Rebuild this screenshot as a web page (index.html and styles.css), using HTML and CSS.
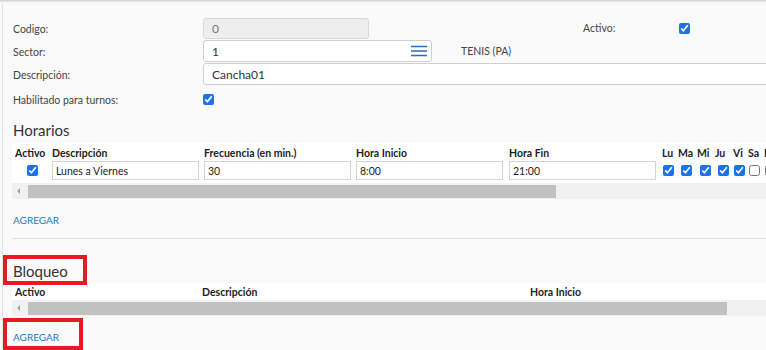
FILE: index.html
```html
<!DOCTYPE html>
<html lang="es">
<head>
  <meta charset="UTF-8" />
  <meta name="viewport" content="width=device-width, initial-scale=1.0"/>
  <title>Cancha</title>
  <link rel="stylesheet" href="styles.css">
</head>
<body>
  <!-- Shadow of the toolbar above -->
  <div class="edge"></div>

  <div class="panel">
    <!-- Main data -->
    <div class="row">
      <label class="label">Codigo:</label>
      <input class="field field-code" type="text" value="0" readonly />
      <label class="label-side">Activo:</label>
      <input class="check" type="checkbox" checked />
    </div>

    <div class="row">
      <label class="label">Sector:</label>
      <div class="field field-sector">
        <input class="field-inner" type="text" value="1" />
        <svg class="menu-icon" width="16" height="12" viewBox="0 0 16 12">
          <path d="M0 1.5h16M0 6h16M0 10.5h16" stroke="#2b6cb3" stroke-width="1.4" fill="none"/>
        </svg>
      </div>
      <span class="sector-name">TENIS (PA)</span>
    </div>

    <div class="row">
      <label class="label">Descripción:</label>
      <input class="field field-wide" type="text" value="Cancha01" />
    </div>

    <div class="row row-check">
      <label class="label">Habilitado para turnos:</label>
      <input class="check" type="checkbox" checked />
    </div>

    <!-- Horarios -->
    <h2 class="section-title">Horarios</h2>
    <div class="grid grid-horarios">
      <div class="th th-first">Activo</div>
      <div class="th">Descripción</div>
      <div class="th">Frecuencia (en min.)</div>
      <div class="th">Hora Inicio</div>
      <div class="th">Hora Fin</div>
      <div class="th">Lu</div>
      <div class="th">Ma</div>
      <div class="th">Mi</div>
      <div class="th">Ju</div>
      <div class="th">Vi</div>
      <div class="th">Sa</div>
      <div class="th">D</div>

      <div class="td td-center"><input class="check" type="checkbox" checked /></div>
      <div class="td"><input class="cell-input" type="text" value="Lunes a Viernes" /></div>
      <div class="td"><input class="cell-input" type="text" value="30" /></div>
      <div class="td"><input class="cell-input" type="text" value="8:00" /></div>
      <div class="td"><input class="cell-input" type="text" value="21:00" /></div>
      <div class="td td-day"><input class="check" type="checkbox" checked /></div>
      <div class="td td-day day-in"><input class="check" type="checkbox" checked /></div>
      <div class="td td-day day-in"><input class="check" type="checkbox" checked /></div>
      <div class="td td-day day-in"><input class="check" type="checkbox" checked /></div>
      <div class="td td-day"><input class="check" type="checkbox" checked /></div>
      <div class="td td-day"><input class="check" type="checkbox" /></div>
      <div class="td td-day"><input class="check" type="checkbox" /></div>
    </div>
    <div class="scrollbar">
      <span class="scroll-arrow"></span>
      <span class="scroll-thumb thumb-horarios"></span>
    </div>
    <a class="add-link" href="#">AGREGAR</a>

    <hr class="divider" />

    <!-- Bloqueo -->
    <h2 class="section-title title-bloqueo">Bloqueo</h2>
    <div class="grid grid-bloqueo">
      <div class="th th-first">Activo</div>
      <div class="th th-pad">Descripción</div>
      <div class="th th-pad">Hora Inicio</div>
    </div>
    <div class="scrollbar">
      <span class="scroll-arrow"></span>
      <span class="scroll-thumb thumb-bloqueo"></span>
    </div>
    <a class="add-link" href="#">AGREGAR</a>
  </div>

  <!-- Red highlight marks -->
  <div class="mark mark-title"></div>
  <div class="mark mark-add"></div>
</body>
</html>
```

FILE: styles.css
```css
:root {
  --bg: #fafafa;
  --label: #444;
  --text: #333;
  --border: #cfcfcf;
  --link: #2479c2;
  --check: #1a73e8;
  --mark: #e31b23;
}

body {
  margin: 0;
  background: var(--bg);
  font-family: 'Lato', 'Open Sans', sans-serif;
  font-size: 11px;
  color: var(--text);
  overflow: hidden;
}

.edge {
  height: 3px;
  background: linear-gradient(#cdcdcd, #ececec 60%, var(--bg));
}

.panel {
  margin-left: 2px;
  border-left: 1px solid #e3e3e3;
  padding: 14px 0 0 10px;
  min-height: 400px;
}

/* Form rows */
.row {
  display: flex;
  align-items: center;
  height: 22px;
  margin-bottom: 1px;
}

.row-check {
  height: 24px;
  margin-top: 2px;
}

.label {
  width: 190px;
  flex-shrink: 0;
  padding-top: 1px;
  color: var(--label);
  font-size: 10.5px;
}

.field {
  box-sizing: border-box;
  height: 22px;
  border: 1px solid var(--border);
  border-radius: 3px;
  background: #fff;
  font-family: inherit;
  font-size: 12px;
  color: var(--text);
  padding: 0 8px;
  outline: none;
}

.field-code {
  width: 166px;
  height: 21px;
  background: #eee;
  border-color: #d8d8d8;
  color: #777;
}

.label-side {
  margin-left: 214px;
  width: 96px;
  color: var(--label);
  font-size: 10.5px;
}

.field-sector {
  width: 229px;
  display: flex;
  align-items: center;
  padding-right: 4px;
}

.field-inner {
  flex: 1;
  min-width: 0;
  border: none;
  background: transparent;
  font: inherit;
  color: inherit;
  padding: 0;
  outline: none;
}

.menu-icon {
  flex-shrink: 0;
}

.sector-name {
  margin-left: 29px;
  color: var(--label);
  font-size: 10.5px;
}

.field-wide {
  flex: 1;
  margin-right: -12px;
  border-radius: 3px 0 0 3px;
}

.check {
  width: 11px;
  height: 11px;
  margin: 0;
  accent-color: var(--check);
}

/* Sections */
.section-title {
  margin: 10px 0 4px;
  font-size: 15px;
  line-height: 18px;
  font-weight: 400;
  color: var(--text);
}

.title-bloqueo {
  margin: 23px 0 3px;
}

.grid {
  display: grid;
  margin-left: -1px;
  background: #fff;
}

.grid-horarios {
  grid-template-columns: 40px 152px 152px 153px 153px 16px 19px 18px 18px 15px 16px 16px;
  grid-template-rows: 17px 23px;
}

.grid-bloqueo {
  grid-template-columns: 187px 328px 1fr;
  grid-template-rows: 17px;
}

.th {
  display: flex;
  align-items: center;
  font-size: 10.5px;
  font-weight: 700;
  color: #222;
  white-space: nowrap;
}

.grid-horarios .th {
  padding-top: 3px;
}

.th-first,
.th-pad {
  padding-left: 3px;
}

.td {
  display: flex;
  align-items: flex-start;
  padding-top: 1px;
}

.td-center,
.td-day {
  justify-content: center;
  align-items: center;
  padding-top: 0;
  padding-bottom: 2px;
}

.td-day {
  justify-content: flex-start;
  padding-left: 1px;
}

.day-in {
  padding-left: 3px;
}

.cell-input {
  box-sizing: border-box;
  width: 147px;
  height: 19px;
  border: 1px solid #d4d4d4;
  background: #fff;
  font-family: inherit;
  font-size: 10.5px;
  color: #222;
  padding: 0 3px;
  outline: none;
}

/* Fake horizontal scrollbar */
.scrollbar {
  display: flex;
  align-items: center;
  height: 16px;
  margin-left: -1px;
  background: #f1f1f1;
}

.scroll-arrow {
  width: 0;
  height: 0;
  margin: 0 8px 0 5px;
  border-top: 3px solid transparent;
  border-bottom: 3px solid transparent;
  border-right: 3px solid #a3a3a3;
}

.scroll-thumb {
  height: 13px;
  background: #c1c1c1;
}

.thumb-horarios {
  width: 528px;
}

.thumb-bloqueo {
  width: 699px;
}

.add-link {
  display: block;
  width: max-content;
  margin-top: 14px;
  font-size: 10px;
  line-height: 14px;
  color: var(--link);
  text-decoration: none;
}

.divider {
  margin: 11px 0 0 -1px;
  border: none;
  border-top: 1px solid #e0e0e0;
}

/* Highlight marks drawn over the form */
.mark {
  position: absolute;
  box-sizing: border-box;
  border: 4px solid var(--mark);
}

.mark-title {
  left: 3px;
  top: 255px;
  width: 84px;
  height: 30px;
}

.mark-add {
  left: 3px;
  top: 318px;
  width: 80px;
  height: 32px;
}
```
